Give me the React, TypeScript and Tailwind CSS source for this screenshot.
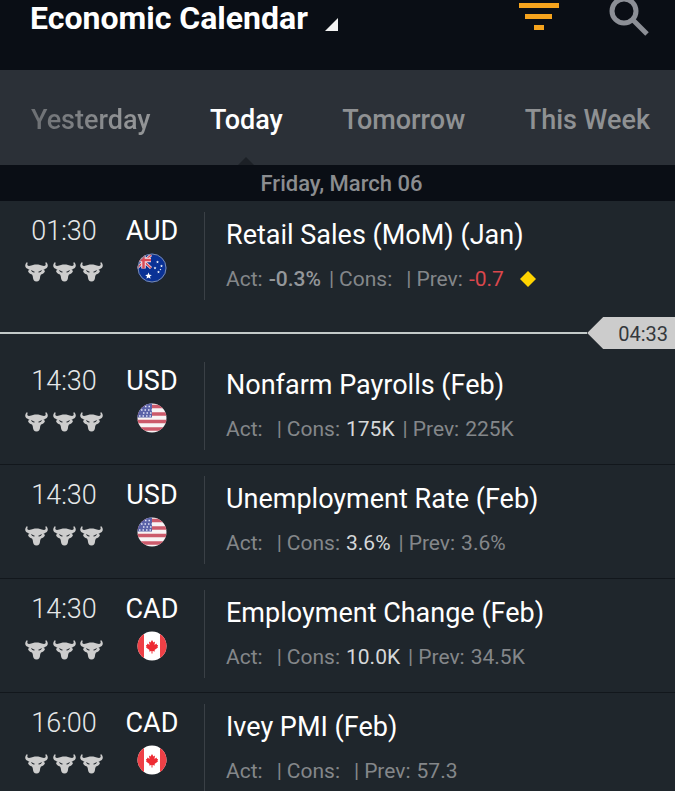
import { useState } from 'react';

type Country = 'au' | 'us' | 'ca';

interface CalendarEvent {
  time: string;
  currency: string;
  country: Country;
  title: string;
  actual?: string;
  consensus?: string;
  previous: string;
  revised?: boolean;
}

const TABS = ['Yesterday', 'Today', 'Tomorrow', 'This Week'];

const PAST: CalendarEvent[] = [
  { time: '01:30', currency: 'AUD', country: 'au', title: 'Retail Sales (MoM) (Jan)', actual: '-0.3%', previous: '-0.7', revised: true },
];

const UPCOMING: CalendarEvent[] = [
  { time: '14:30', currency: 'USD', country: 'us', title: 'Nonfarm Payrolls (Feb)', consensus: '175K', previous: '225K' },
  { time: '14:30', currency: 'USD', country: 'us', title: 'Unemployment Rate (Feb)', consensus: '3.6%', previous: '3.6%' },
  { time: '14:30', currency: 'CAD', country: 'ca', title: 'Employment Change (Feb)', consensus: '10.0K', previous: '34.5K' },
  { time: '16:00', currency: 'CAD', country: 'ca', title: 'Ivey PMI (Feb)', previous: '57.3' },
];

function Bull() {
  return (
    <svg viewBox="0 0 46 40" className="h-5 w-[23px]" aria-hidden="true">
      <path
        fill="#cdcdcd"
        d="M3 1C-1 5 0 11 4 13c2 1 3 2 5 2l-3 3c1 4 4 6 8 7 1 2 2 4 2 7 1 4 2 7 7 7s6-3 7-7c0-3 1-5 2-7 4-1 7-3 8-7l-3-3c2 0 3-1 5-2 4-2 5-8 1-12-1-1-3 0-2 2 1 3 0 4-3 5-3 0-6-2-8-2-2-1-5-1-7-1s-5 0-7 1c-2 0-5 2-8 2-3-1-4-2-3-5 1-2-1-3-2-2z"
      />
      <path fill="#20262c" d="M12 16l8 4c-2 2-7 0-8-4zM34 16l-8 4c2 2 7 0 8-4z" />
    </svg>
  );
}

function Star({ x, y, r }: { x: number; y: number; r: number }) {
  return (
    <path
      transform={`translate(${x} ${y}) scale(${r})`}
      fill="#fff"
      d="M0-1 .26-.36.95-.31.42.14.59.81 0 .44-.59.81-.42.14-.95-.31-.26-.36z"
    />
  );
}

function Flag({ country }: { country: Country }) {
  return (
    <svg viewBox="0 0 60 60" className="size-[30px]" role="img" aria-label={country.toUpperCase()}>
      <clipPath id={`disc-${country}`}>
        <circle cx="30" cy="30" r="29" />
      </clipPath>
      <g clipPath={`url(#disc-${country})`}>
        {country === 'au' && (
          <>
            <path fill="#0a3195" d="M0 0h60v60H0z" />
            <path stroke="#f3dfe4" strokeWidth="6" d="M0 4l28 26M28 4L0 30" />
            <path stroke="#d94a56" strokeWidth="3" d="M0 4l28 26M28 4L0 30" />
            <path stroke="#f3dfe4" strokeWidth="9" d="M13 0v31M0 14h28" />
            <path stroke="#d94a56" strokeWidth="5" d="M13 0v31M0 14h28" />
            <Star x={23} y={46} r={7} />
            <Star x={41} y={18} r={3} />
            <Star x={49} y={26} r={3} />
            <Star x={36} y={30} r={3} />
            <Star x={43} y={38} r={3} />
            <Star x={47} y={33} r={2} />
          </>
        )}
        {country === 'us' && (
          <>
            <path fill="#f8f4f5" d="M0 0h60v60H0z" />
            <path stroke="#cc5a6b" strokeWidth="7" d="M0 7h60M0 22h60M0 37h60M0 52h60" />
            <path fill="#5a62a8" d="M0 0h30v29H0z" />
            <path
              stroke="#dfe2f5"
              strokeWidth="3"
              strokeDasharray="3 4"
              d="M16 7h14M8 14h22M12 20h18M4 26h26"
            />
          </>
        )}
        {country === 'ca' && (
          <>
            <path fill="#fff" d="M0 0h60v60H0z" />
            <path fill="#ee4046" d="M0 0h14v60H0zM46 0h14v60H46z" />
            <path
              fill="#ee2b33"
              d="M30 18l3 5 3-2-1 7 4-3 1 3 2 0-1 4 1 1-7 5 1 3-5-1v5h-2v-5l-5 1 1-3-7-5 1-1-1-4h2l1-3 4 3-1-7 3 2z"
            />
          </>
        )}
      </g>
      {country === 'au' && <circle cx="30" cy="30" r="28" fill="none" stroke="#7d8ba6" strokeWidth="2" />}
    </svg>
  );
}

function Figure({ label, value, tone, first }: { label: string; value?: string; tone?: string; first?: boolean }) {
  return (
    <div className="flex items-center">
      {!first && <span className="mr-[5px]">|</span>}
      <dt>{label}:</dt>
      <dd className={`ml-[6px] ${tone ?? ''}`}>{value}</dd>
    </div>
  );
}

function EventRow({ event, divided }: { event: CalendarEvent; divided?: boolean }) {
  return (
    <li
      className={`flex h-[114px] border-b pt-[11px] pl-6 ${divided ? 'border-[#12171c]' : 'border-transparent'}`}
    >
      <div className="flex w-20 flex-col items-center">
        <time className="text-[27px] leading-[38px] font-light text-[#e6e8e9]">{event.time}</time>
        <div className="mt-3 flex w-[78px] justify-between" role="img" aria-label="High volatility expected">
          <Bull />
          <Bull />
          <Bull />
        </div>
      </div>
      <div className="flex w-[100px] flex-col items-center gap-[3px] pr-1">
        <span className="text-[27px] leading-[38px] text-white">{event.currency}</span>
        <Flag country={event.country} />
      </div>
      <div className="h-[88px] min-w-0 flex-1 border-l border-[#3a4046] pl-[21px] whitespace-nowrap">
        <h2 className="text-[27px] leading-[46px] text-white">{event.title}</h2>
        <dl className="flex items-center gap-2 text-[21px] leading-[42px] text-[#84878a]">
          <Figure first label="Act" value={event.actual} tone="font-medium text-[#94979a]" />
          <Figure label="Cons" value={event.consensus} tone="text-[#d6d8d9]" />
          <Figure label="Prev" value={event.previous} tone={event.revised ? 'text-[#d9474c]' : ''} />
          {event.revised && (
            <svg viewBox="0 0 16 16" className="ml-2 size-4" role="img" aria-label="Revised">
              <path fill="#ffd400" d="M8 0l8 8-8 8-8-8z" />
            </svg>
          )}
        </dl>
      </div>
    </li>
  );
}

export default function App() {
  const [active, setActive] = useState('Today');

  return (
    <div className="h-screen overflow-hidden bg-[#1f262c] font-[Roboto,sans-serif]">
      <header className="flex h-[70px] items-start justify-between bg-[#0a0e15] pr-6 pl-[30px]">
        <h1>
          <button className="flex items-end text-[32px] leading-9 font-bold text-white">
            Economic Calendar
            <svg viewBox="0 0 14 14" className="mb-[5px] ml-4 size-[14px]" aria-hidden="true">
              <path fill="#f2f2f2" d="M14 1v13H1z" />
            </svg>
          </button>
        </h1>
        <div className="flex gap-[50px]">
          <button aria-label="Filter">
            <svg viewBox="0 0 40 36" className="h-9 w-10">
              <path fill="#f5a31d" d="M0 3h40v5H0zM6 14h27v5H6zM15 25h10v5H15z" />
            </svg>
          </button>
          <button aria-label="Search">
            <svg viewBox="0 0 42 36" className="h-9 w-[42px]" fill="none" stroke="#8c8f96">
              <circle cx="15" cy="11" r="12" strokeWidth="5" />
              <path strokeWidth="5" d="M24 20l14 14" />
            </svg>
          </button>
        </div>
      </header>

      <nav className="flex h-[95px] items-stretch justify-between bg-[#2b3037] pr-[25px] pl-[31px]">
        {TABS.map((tab) => (
          <button
            key={tab}
            onClick={() => setActive(tab)}
            aria-current={tab === active ? 'date' : undefined}
            className={`relative pt-[6px] text-[27px] font-medium whitespace-nowrap ${
              tab === active
                ? 'text-white'
                : tab === 'Yesterday'
                  ? 'bg-linear-to-r from-[#6c6f73] to-[#929496] to-80% bg-clip-text text-transparent'
                  : 'text-[#8f9193]'
            }`}
          >
            {tab}
            {tab === active && (
              <svg viewBox="0 0 16 8" className="absolute bottom-0 left-1/2 h-2 w-4 -translate-x-1/2" aria-hidden="true">
                <path fill="#1c2026" d="M8 0l8 8H0z" />
              </svg>
            )}
          </button>
        ))}
      </nav>

      <main>
        <p className="h-9 bg-[#0a0e15] pl-2 text-center text-[22px] leading-[38px] font-medium text-[#8b8d90]">
          Friday, March 06
        </p>
        <ul>
          {PAST.map((event) => (
            <EventRow key={event.title} event={event} />
          ))}
        </ul>
        <div className="flex h-9 items-center">
          <div className="h-[2px] flex-1 bg-[#c3cac9]" />
          <time className="h-8 bg-[#cccccc] pr-[7px] pl-[31px] text-[20px] leading-[34px] text-[#34383c] [clip-path:polygon(0_50%,16px_0,100%_0,100%_100%,16px_100%)]">
            04:33
          </time>
        </div>
        <ul>
          {UPCOMING.map((event) => (
            <EventRow key={event.title} event={event} divided />
          ))}
        </ul>
      </main>
    </div>
  );
}
